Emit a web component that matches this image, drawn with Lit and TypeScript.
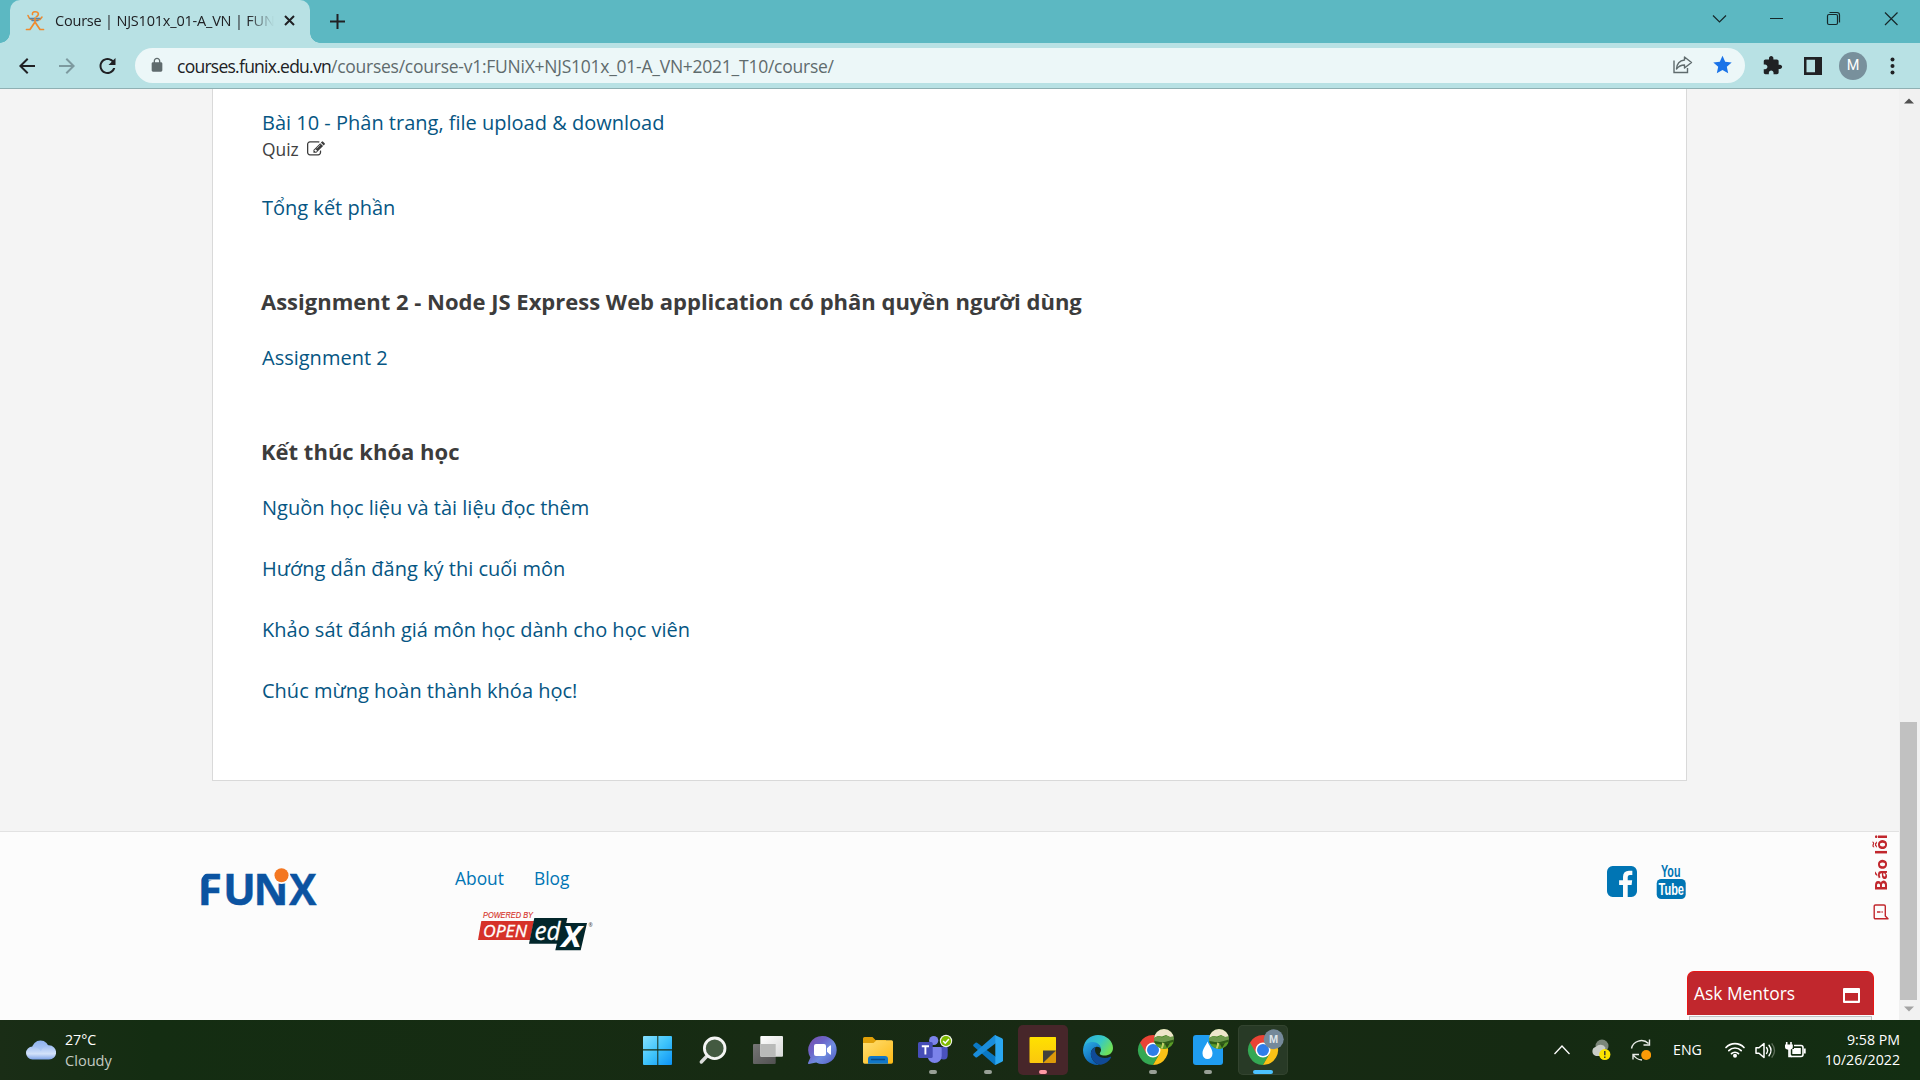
import { LitElement, html, css, svg, nothing, TemplateResult } from "lit";
import { customElement, property } from "lit/decorators.js";
import { classMap } from "lit/directives/class-map.js";

const chromeLogo = svg`
  <path d="M12 17.500 A15 15 0 0 0 25 40 L31.500 28.700 L25 25 Z" fill="#34a853"/>
  <path d="M25 17.500 H38 A15 15 0 0 1 25 40 L31.500 28.700 Z" fill="#fbc116"/>
  <path d="M12 17.500 A15 15 0 0 1 38 17.500 H25 L18.500 28.700 Z" fill="#ea4335"/>
  <circle cx="25" cy="25" r="7.500" fill="#fff"/><circle cx="25" cy="25" r="6" fill="#2f7de9"/>`;

const photoBadge = svg`
  <clipPath id="pb"><circle cx="36" cy="14" r="10"/></clipPath>
  <g clip-path="url(#pb)">
    <rect x="26" y="4" width="20" height="20" fill="#44801f"/>
    <path d="M26 4h20v7.500l-4 .5-4-2-4 1.500-4-.5-4 2z" fill="#efe6cb"/>
    <path d="M26 13l4-2 4 1.500 4-2 4 1.500 4-.5v4l-9 2-11-1z" fill="#6f9a4c"/>
    <path d="M26 16l9 1.500 11-3v3l-9 2-11-1z" fill="#2f5c18"/>
    <path d="M27 19l8 1 10-3v7H26z" fill="#5a9a28"/>
    <path d="M34 17.500l2.500 1-2 5.500h-2l1.500-4z" fill="#c5cf6a"/>
    <path d="M37 19l5-1-3 5z" fill="#2c4f17"/>
  </g>`;

interface App { name: string; kind?: string; art: TemplateResult; run?: string; }

const apps: App[] = [
  { name: "Start", art: svg`
    <linearGradient id="st" x1="0" y1="0" x2="1" y2="1"><stop offset="0" stop-color="#86e1ff"/><stop offset=".5" stop-color="#3fc4fb"/><stop offset="1" stop-color="#0c93f5"/></linearGradient>
    <path d="M11 11h13.300v13.300H10V12a1 1 0 0 1 1-1zM25.300 11H38a1 1 0 0 1 1 1v12.300H25.300zM10 25.600h14.300V40H11a1 1 0 0 1-1-1zM25.300 25.600H39V39a1 1 0 0 1-1 1H25.300z" fill="url(#st)"/>` },
  { name: "Search", art: svg`
    <path d="M18.500 31.500L13.300 37" stroke="#dadcdb" stroke-width="3.400" stroke-linecap="round"/>
    <circle cx="26.700" cy="23.300" r="10.300" fill="#435a41" stroke="#f4f5f4" stroke-width="2.800"/>` },
  { name: "Task view", art: svg`
    <linearGradient id="tg" x1="0" y1="0" x2="1" y2="1"><stop offset="0" stop-color="#767676"/><stop offset="1" stop-color="#515151"/></linearGradient>
    <linearGradient id="tw" x1="0" y1="0" x2="1" y2="1"><stop offset="0" stop-color="#fff"/><stop offset="1" stop-color="#d8d8d8"/></linearGradient>
    <rect x="10" y="19" width="22.700" height="20" rx="1" fill="url(#tg)"/>
    <rect x="17.300" y="11" width="22.700" height="20.700" rx="1" fill="url(#tw)"/>
    <path d="M17.300 19h15.400v12.700H18.300a1 1 0 0 1-1-1z" fill="#b9bab9"/>` },
  { name: "Chat", art: svg`
    <linearGradient id="ch" x1="0" y1="0" x2="1" y2="1"><stop offset="0" stop-color="#7a4fa8"/><stop offset=".35" stop-color="#6c64c8"/><stop offset=".6" stop-color="#6f8de0"/><stop offset="1" stop-color="#5257c0"/></linearGradient>
    <path d="M24.700 11a14 14 0 1 1-6.500 26.400L11 39c-1 .2-1.300-.7-.8-1.400l2.200-5.200A14 14 0 0 1 24.700 11z" fill="url(#ch)"/>
    <rect x="16" y="19" width="12" height="12" rx="2" fill="#fff"/><path d="M29 23.200l3-2.700q1-.5 1 .6v7.800q0 1.100-1 .6l-3-2.700z" fill="#fff"/>` },
  { name: "File Explorer", art: svg`
    <linearGradient id="fo" x1="0" y1="0" x2="1" y2="1"><stop offset="0" stop-color="#ffdf74"/><stop offset="1" stop-color="#fdb914"/></linearGradient>
    <path d="M11.500 12h8l3 3H33v6H10v-7.500q0-1.500 1.500-1.500z" fill="#e0a008"/>
    <path d="M10 18h10.500l3-2.800H38.500q1.500 0 1.500 1.500V37q0 1.700-1.700 1.700H11.700Q10 38.700 10 37z" fill="url(#fo)"/>
    <path d="M15 38.700V34q0-3 3-3h14q3 0 3 3v4.700z" fill="#1177c8"/><path d="M18.500 34.500h13" stroke="#0a4a86" stroke-width="1.300" stroke-linecap="round"/>` },
  { name: "Teams", run: "idle", art: svg`
    <circle cx="25.700" cy="15.500" r="4.600" fill="#7b83eb"/>
    <path d="M31 22h8q.7 0 .7.800V30q0 4.500-4 4.500T31 31z" fill="#4a52be"/>
    <path d="M19.700 22h12.500q1.500 0 1.500 1.500V31a7 7 0 0 1-14 0z" fill="#7b83eb"/>
    <rect x="10" y="17" width="14.700" height="16" rx="1.500" fill="#464eb8"/>
    <path d="M13.800 21.200h7.200M17.400 21.200v8.300" stroke="#fff" stroke-width="1.900" fill="none"/>
    <circle cx="38" cy="16" r="6.200" fill="#f0f3ea"/><circle cx="38" cy="16" r="5.100" fill="#7fba00"/>
    <path d="M35.200 16l2 2.200 3.700-4.200" stroke="#fff" stroke-width="1.500" fill="none"/>` },
  { name: "VS Code", run: "idle", art: svg`
    <path d="M10.500 19.500l2-1.800q.8-.6 1.600 0L33 32v7.800q-1.200.3-2-.5L10.500 21.200q-.8-.8 0-1.700z" fill="#0a78c4"/>
    <path d="M10.500 30.500l2 1.800q.8.600 1.600 0L33 18v-7.800q-1.200-.3-2 .5L10.500 28.800q-.8.800 0 1.700z" fill="#1a8ddb"/>
    <path d="M32.300 10.200L39 13.200Q40 13.700 40 14.800V35.200Q40 36.300 39 36.800L32.300 39.900Z" fill="#2aa7f0"/>` },
  { name: "Sticky Notes", kind: "alert", run: "warn", art: svg`
    <linearGradient id="sn" x1="0" y1="0" x2="0" y2="1"><stop offset="0" stop-color="#ffe100"/><stop offset="1" stop-color="#fbc70e"/></linearGradient>
    <path d="M12.500 12h25q.5 0 .5.500V26L26 38H12.500q-1 0-1-1V13q0-1 1-1z" fill="url(#sn)"/>
    <path d="M38 25.500V37q0 1-1 1H25z" fill="#dc9a0a"/><path d="M25 25.500h13L25 38z" fill="#41403c"/>` },
  { name: "Edge", art: svg`
    <linearGradient id="e1" x1="0" y1="0" x2="1" y2=".5"><stop offset="0" stop-color="#2aa9e4"/><stop offset=".6" stop-color="#37c9c4"/><stop offset="1" stop-color="#6ee05a"/></linearGradient>
    <linearGradient id="e2" x1="0" y1="0" x2=".6" y2="1"><stop offset="0" stop-color="#2cb0e8"/><stop offset="1" stop-color="#0b5db0"/></linearGradient>
    <path d="M10.300 23C11.500 15 17.500 10 25 10c9 0 15 6.500 15 13 0 5-4 7.500-8.500 7.500-4 0-5-1.500-4.700-2.300.4-1 1.200-1.500 1.200-3.400 0-3.500-4-7-8.500-7-4.500 0-7.500 2-9.200 5.200z" fill="url(#e1)"/>
    <path d="M10 25c0-4.500 4.500-8 9.500-8 5 0 8.500 3.500 8.500 7-1-1.500-3-2.500-5-2-4 1-5.500 4-5 8 .5 4.500 4 9 9 9.800C17.500 41 10 34.500 10 25z" fill="url(#e2)"/>
    <path d="M22.500 22.200c-3.500 1-5.500 5-4.300 9.300C19.500 36 24 40 28 39.700c4.500-.7 8-3.500 10-7 .4-.8-.2-1.200-.8-.9-4 2-10 1.500-13-1.800-2.500-2.700-2.600-5.300-1.700-7.800z" fill="#104a96"/>` },
  { name: "Chrome", run: "idle", art: svg`${chromeLogo}${photoBadge}` },
  { name: "Water", run: "idle", art: svg`
    <rect x="10" y="10" width="30" height="30" rx="3" fill="#1f9df1"/>
    <path d="M24.500 16.500c1.500 4 5 7.500 5 12a5 5.500 0 0 1-10 0c0-4.500 3.500-8 5-12z" fill="#fff"/>${photoBadge}` },
  { name: "Chrome profile", kind: "current", run: "on", art: svg`${chromeLogo}
    <circle cx="35.700" cy="14.300" r="10" fill="#75899a"/>
    <text x="35.700" y="18" text-anchor="middle" class="mono">M</text>` },
];

@customElement("task-bar")
export class TaskBar extends LitElement {
  static styles = css`
    :host { display: grid; grid-template-columns: 633px 1fr auto; height: 60px; background: linear-gradient(90deg, #1a2d16 0, #142d12 8%, #172b13 40%, #182a14 55%, #152a12 80%, #132e12 100%); color: #fff; font: 14.2px/20px "Open Sans", "Noto Sans", sans-serif; }
    svg { display: block; flex: none; }
    .weather { display: flex; align-items: center; padding-left: 26px; gap: 9px; }
    .cloudy { color: #c3cac2; font-size: 14.600px; }
    .apps { display: flex; gap: 5px; align-items: center; }
    .app { width: 50px; height: 50px; border-radius: 5px; display: grid; }
    .app > * { grid-area: 1 / 1; }
    .alert { background: #47262a; }
    .current { background: #283a26; box-shadow: inset 0 0 0 1px #33442f; }
    .pip { width: 8px; height: 4px; border-radius: 2px; background: #98a096; align-self: end; justify-self: center; margin-bottom: 1px; }
    .pip.warn { background: #ff99a4; }
    .pip.on { width: 20px; background: #4cc2ff; }
    .mono { font: 700 11px "Liberation Sans", sans-serif; fill: #dfe5e8; }
    .tray { display: flex; align-items: center; padding-right: 20px; }
    .clock { text-align: right; width: 82px; margin-left: 12px; }
    .lang { width: 30px; margin: 0 21px 0 22px; }
  `;
  render() {
    return html`
      <div class="weather">
        <svg width="30" height="22" viewBox="0 0 30 22">
          <defs><linearGradient id="cl" x1="0" y1="0" x2="0" y2="1"><stop offset="0" stop-color="#8fb2ef"/><stop offset="1" stop-color="#c3d9fb"/></linearGradient>
          <linearGradient id="cm" x1="0" y1="0" x2="0" y2="1"><stop offset="0" stop-color="#9dbcf2"/><stop offset=".6" stop-color="#d3e2fa"/><stop offset="1" stop-color="#7fa4e8"/></linearGradient></defs>
          <circle cx="14.500" cy="10" r="8.500" fill="url(#cl)"/>
          <path d="M6.500 7.500c4 0 7 2 8.500 5 1-3.500 4-6.200 8-6.200a7 7 0 0 1 0 14.200H6.500a6.500 6.500 0 0 1 0-13z" fill="url(#cm)"/>
        </svg>
        <div><div>27°C</div><div class="cloudy">Cloudy</div></div>
      </div>
      <div class="apps">${apps.map((a) => html`
        <div class=${classMap({ app: true, [a.kind ?? "plain"]: true })} aria-label=${a.name}>
          <svg width="50" height="50" viewBox="0 0 50 50" fill="none">${a.art}</svg>
          ${a.run ? html`<span class=${classMap({ pip: true, [a.run]: true })}></span>` : nothing}
        </div>`)}</div>
      <div class="tray">
        <svg width="120" height="40" viewBox="0 0 120 40" fill="none">
          <path d="M23.500 24l7.500-8 7.500 8" stroke="#fff" stroke-width="1.300"/>
          <circle cx="71" cy="16" r="6.500" fill="#7b8679"/><path d="M65 26a4.800 4.800 0 0 1 0-9.300 6 6 0 0 1 9.500 1l-3 8.300z" fill="#c8ccc7"/>
          <circle cx="75.300" cy="24.500" r="5.600" fill="#fbe300" transform="translate(-1.500 0)"/><path d="M73.800 21v4.200M73.800 26.500v1.500" stroke="#333" stroke-width="1.400"/>
          <path d="M100.500 18.500a10 9.500 0 0 1 17-5M118.500 9.500v5.500h-6M102 29.500v-5h6M102 24.500q3 5 9 5.500" stroke="#e8ebe7" stroke-width="1.400"/>
          <circle cx="115.200" cy="25" r="5" fill="#fb9a07"/>
        </svg>
        <span class="lang">ENG</span>
        <svg width="82" height="22" viewBox="0 0 82 22" fill="none">
          <g stroke="#fff" stroke-width="1.700" stroke-linecap="round"><path d="M2 8.500a12.300 12.300 0 0 1 18 0"/><path d="M4.800 11.700a8.500 8.500 0 0 1 12.400 0"/><path d="M7.500 14.700a5 5 0 0 1 7 0"/></g><circle cx="11" cy="16.800" r="2" fill="#fff"/>
          <path d="M32 8.800h3l5-4.300v14l-5-4.300h-3z" stroke="#fff" stroke-width="1.500" stroke-linejoin="round"/>
          <path d="M42.500 8.500q2.200 3 0 6M45 6.300q4 5.200 0 10.400" stroke="#fff" stroke-width="1.400" stroke-linecap="round"/><path d="M47.700 4.300q5.500 7.200 0 14.400" stroke="#5c6d59" stroke-width="1.400"/>
          <rect x="66" y="6.500" width="13" height="11" rx="2" stroke="#fff" stroke-width="1.600"/><rect x="68.300" y="9" width="8.500" height="6" fill="#fff"/><path d="M80.800 9.500v5" stroke="#fff" stroke-width="1.800"/>
          <path d="M60.500 4.500h9.500v5.500h-9z" fill="#152a12"/><path d="M62.700 3v3M67 3v3M65 10v7.500h3" stroke="#fff" stroke-width="1.600"/><path d="M61 5.500h7.800v2.500q0 2.800-3.900 2.800T61 8z" fill="#fff"/>
        </svg>
        <div class="clock"><div>9:58 PM</div><div>10/26/2022</div></div>
      </div>`;
  }
}

@customElement("browser-chrome")
export class BrowserChrome extends LitElement {
  static styles = css`
    :host { display: block; font-family: "Open Sans", "Noto Sans", sans-serif; color: #202124; }
    svg { display: block; flex: none; }
    .strip { height: 43px; background: #5cb8c2; display: flex; align-items: flex-end; }
    .edge { width: 10px; height: 10px; overflow: hidden; }
    .edge.l { background: radial-gradient(circle at 0 0, #5cb8c2 9.500px, #b8e1e4 10px); }
    .edge.r { background: radial-gradient(circle at 100% 0, #5cb8c2 9.500px, #b8e1e4 10px); }
    .tab { width: 300px; height: 43px; box-sizing: border-box; background: #b8e1e4; border-radius: 10px 10px 0 0; display: flex; align-items: center; padding: 0 14px 2px 15px; }
    .title { width: 219px; margin-left: 10px; overflow: hidden; white-space: nowrap; font-size: 14.500px; letter-spacing: -0.200px; line-height: 22px; mask-image: linear-gradient(90deg, #000 88%, transparent 100%); }
    .tab .x { margin-left: 10px; }
    .plus { margin: 0 0 14px 10px; }
    .win { margin-left: auto; height: 43px; }
    .bar { height: 45px; background: #b8e1e4; border-bottom: 1px solid #8fb0b3; display: flex; align-items: center; }
    .nav { display: flex; gap: 20px; padding-left: 17px; width: 135px; box-sizing: border-box; }
    .omni { width: 1610px; height: 35px; margin-top: -1px; border-radius: 18px; background: #ecf7f8; display: flex; align-items: center; box-sizing: border-box; padding: 0 12px 0 14px; font-size: 17.500px; line-height: 24px; white-space: nowrap; color: #5f6b6d; }
    .host, .path { padding-top: 1px; }
    .host { color: #202124; margin-left: 12px; letter-spacing: -0.740px; }
    .path { letter-spacing: -0.250px; }
    .right { margin-left: auto; }
    .avatar { width: 28px; height: 28px; border-radius: 50%; background: #78909c; color: #fff; font: 14.500px/28px Roboto, sans-serif; text-align: center; margin: 0 15px 0 17px; }
    .tools { display: flex; align-items: center; padding-left: 17px; }
    .side { margin-left: 21px; }
  `;
  render() {
    return html`
      <div class="strip">
        <div class="edge l"></div>
        <div class="tab">
          <svg width="20" height="22" viewBox="0 0 20 22" fill="none" stroke-linecap="round" stroke-linejoin="round">
            <path d="M7.500 4.500Q7 1.800 10 1.700t3.300 2-2 3M3 5.500l1.500 3L8 10M17 7l-2 2.500-4 1" stroke="#f08a2c" stroke-width="1.600"/>
            <path d="M5 8.500h10M7 10.500h6" stroke="#5c84a6" stroke-width="1.300"/>
            <path d="M10 8v5M10 12l-5 7.500H1.500M10 12l5 7.500h3.500" stroke="#f08a2c" stroke-width="1.700"/>
          </svg>
          <span class="title">Course | NJS101x_01-A_VN | FUN</span>
          <svg class="x" width="11" height="11" viewBox="0 0 11 11" stroke="#202124" stroke-width="2"><path d="M1 1l9 9M10 1l-9 9"/></svg>
        </div>
        <div class="edge r"></div>
        <svg class="plus" width="15" height="15" viewBox="0 0 15 15" stroke="#202124" stroke-width="2"><path d="M7.500 0v15M0 7.500h15"/></svg>
        <svg class="win" width="220" height="43" viewBox="1700 0 220 43" fill="none" stroke="#16282a" stroke-width="1.200">
          <path d="M1713 15.500l6.500 6.500 6.500-6.500M1770 18.500h13M1885 12.500l12.500 12.500M1897.500 12.500L1885 25"/>
          <rect x="1827.500" y="14.500" width="10" height="10" rx="1.500"/><path d="M1829.500 12.500h7.500q2.500 0 2.500 2.500v7.500"/>
        </svg>
      </div>
      <div class="bar">
        <div class="nav">
          <svg width="20" height="20" viewBox="2 2 20 20" fill="#202124"><path d="M20 11H7.830l5.590-5.590L12 4l-8 8 8 8 1.410-1.410L7.830 13H20z"/></svg>
          <svg width="20" height="20" viewBox="2 2 20 20" fill="#7d9a9f"><path d="M4 11h12.170l-5.590-5.590L12 4l8 8-8 8-1.410-1.410L16.170 13H4z"/></svg>
          <svg width="21" height="20" viewBox="2 2 20 20" fill="#202124"><path d="M17.650 6.350C16.200 4.900 14.210 4 12 4c-4.420 0-7.990 3.580-7.990 8s3.570 8 7.990 8c3.730 0 6.840-2.550 7.730-6h-2.080c-.82 2.330-3.040 4-5.650 4-3.310 0-6-2.690-6-6s2.690-6 6-6c1.660 0 3.140.69 4.220 1.780L13 11h7V4l-2.350 2.350z"/></svg>
        </div>
        <div class="omni">
          <svg width="16" height="16" viewBox="0 0 24 24" fill="#5f6b6d"><path d="M18 8h-1V6c0-2.760-2.240-5-5-5S7 3.240 7 6v2H6c-1.100 0-2 .9-2 2v10c0 1.100.9 2 2 2h12c1.100 0 2-.9 2-2V10c0-1.100-.9-2-2-2zM9 6c0-1.660 1.340-3 3-3s3 1.340 3 3v2H9V6z"/></svg>
          <span class="host">courses.funix.edu.vn</span><span class="path">/courses/course-v1:FUNiX+NJS101x_01-A_VN+2021_T10/course/</span>
          <svg class="right" width="61" height="22" viewBox="0 0 61 22" fill="none">
            <path d="M2 6.500v12h13.500V14" stroke="#5f6b6d" stroke-width="1.400"/>
            <path d="M12.500 3l7 5.500-7 5.500V11q-5 0-8 4 .5-8 8-9z" stroke="#5f6b6d" stroke-width="1.400" stroke-linejoin="round"/>
            <path d="M50.500 1.700l2.700 6 6.500.7-4.900 4.400 1.400 6.500-5.700-3.400-5.700 3.400 1.400-6.500-4.900-4.400 6.500-.7z" fill="#1a73e8"/>
          </svg>
        </div>
        <div class="tools">
          <svg width="21" height="21" viewBox="0 0 24 24" fill="#202124"><path d="M20.500 11H19V7c0-1.100-.9-2-2-2h-4V3.500C13 2.120 11.880 1 10.500 1S8 2.120 8 3.500V5H4c-1.100 0-1.990.9-1.990 2v3.800H3.500c1.490 0 2.700 1.210 2.700 2.700s-1.210 2.700-2.700 2.700H2V20c0 1.100.9 2 2 2h3.800v-1.500c0-1.490 1.210-2.700 2.700-2.700s2.700 1.210 2.700 2.700V22H17c1.100 0 2-.9 2-2v-4h1.500c1.380 0 2.500-1.120 2.500-2.500S21.880 11 20.500 11z"/></svg>
          <svg class="side" width="18" height="18" viewBox="0 0 18 18"><path fill="#202124" fill-rule="evenodd" d="M0 0h18v18H0zM2.500 2.800v12.400H11V2.800z"/></svg>
          <div class="avatar">M</div>
          <svg width="20" height="20" viewBox="0 0 20 20" fill="#202124"><circle cx="10.500" cy="3.500" r="2"/><circle cx="10.500" cy="10" r="2"/><circle cx="10.500" cy="16.500" r="2"/></svg>
        </div>
      </div>`;
  }
}

interface Section { title?: string; items: { text: string; quiz?: boolean }[]; }

const outline: Section[] = [
  { items: [{ text: "Bài 10 - Phân trang, file upload & download", quiz: true }, { text: "Tổng kết phần" }] },
  { title: "Assignment 2 - Node JS Express Web application có phân quyền người dùng", items: [{ text: "Assignment 2" }] },
  { title: "Kết thúc khóa học", items: [
    { text: "Nguồn học liệu và tài liệu đọc thêm" },
    { text: "Hướng dẫn đăng ký thi cuối môn" },
    { text: "Khảo sát đánh giá môn học dành cho học viên" },
    { text: "Chúc mừng hoàn thành khóa học!" }] },
];

@customElement("course-outline")
export class CourseOutline extends LitElement {
  @property({ attribute: false }) sections: Section[] = [];
  static styles = css`
    :host { display: flex; flex-direction: column; gap: 64px; box-sizing: border-box; width: 1475px; height: 692px; margin-left: 212px; padding: 20px 48px 0; background: #fff; border: 1px solid #d9d9d9; border-top: 0; font: 20px/28px "Open Sans", "Noto Sans", sans-serif; }
    h3 { margin: 0 0 28px; font-size: 22px; line-height: 30px; color: #3c3c3c; }
    .list { display: flex; flex-direction: column; gap: 33px; padding-left: 1px; }
    .link { color: #065683; }
    .quiz { display: flex; align-items: center; gap: 8px; font-size: 17.400px; line-height: 24px; color: #414141; }
  `;
  render() {
    return this.sections.map((s) => html`
      <section>
        ${s.title ? html`<h3>${s.title}</h3>` : nothing}
        <div class="list">${s.items.map((i) => html`
          <div>
            <div class="link">${i.text}</div>
            ${i.quiz ? html`<div class="quiz">Quiz
              <svg width="18" height="18" viewBox="0 0 1792 1792" fill="#3c3c3c"><path d="M888 1184l116-116-152-152-116 116v56h96v96h56zm440-720q-16-16-33 1l-350 350q-17 17-1 33t33-1l350-350q17-17 1-33zm80 594v190q0 119-84.500 203.500t-203.500 84.500h-832q-119 0-203.500-84.500t-84.500-203.500v-832q0-119 84.500-203.500t203.500-84.500h832q63 0 117 25 15 7 18 23 3 17-9 29l-49 49q-14 14-32 8-23-6-45-6h-832q-66 0-113 47t-47 113v832q0 66 47 113t113 47h832q66 0 113-47t47-113v-126q0-13 9-22l64-64q15-15 35-7t20 29zm-96-738l288 288-672 672h-288v-288zm444 132l-92 92-288-288 92-92q28-28 68-28t68 28l152 152q28 28 28 68t-28 68z"/></svg>
            </div>` : nothing}
          </div>`)}</div>
      </section>`);
  }
}

@customElement("site-footer")
export class SiteFooter extends LitElement {
  static styles = css`
    :host { display: flex; box-sizing: border-box; height: 189px; margin-top: 50px; padding: 32px 212px 0 196px; background: #fcfcfc; border-top: 1px solid #e2e2e2; font: 17.400px/28px "Open Sans", "Noto Sans", sans-serif; }
    svg { display: block; flex: none; overflow: visible; }
    .mark { margin-top: -6px; }
    .mid { margin-left: 135px; }
    .links { display: flex; gap: 30px; color: #0075b4; }
    .edx { margin: 14px 0 0 23px; }
    .social { margin-left: auto; display: flex; gap: 19px; }
    .fb { margin-top: 2px; }
    .yt-logo { margin-top: -2px; }
    .word { font: 700 43px "Open Sans", sans-serif; fill: #0b53a1; stroke: #0b53a1; stroke-width: 0.400px; }
    .pow { font: italic 8.500px "Liberation Sans", sans-serif; fill: #d63229; stroke: #d63229; stroke-width: .15px; }
    .open { font: italic 17px "Open Sans", sans-serif; fill: #fff; stroke: #fff; stroke-width: .3px; }
    .ed { font: italic 25px "Open Sans", sans-serif; fill: #fff; stroke: #fff; stroke-width: .3px; }
    .ex { font: italic 700 29px "Open Sans", sans-serif; fill: #fff; }
    .reg { font: 5px "Open Sans", sans-serif; fill: #333; }
    .yt { font: 700 17px "Liberation Sans Narrow", "Liberation Sans", sans-serif; fill: #0075b4; }
    .in { fill: #fff; }
  `;
  render() {
    return html`
      <svg class="mark" width="124" height="62" viewBox="196 858 124 62">
        <text class="word" x="197.500" y="905" textLength="24.500" lengthAdjust="spacingAndGlyphs">F</text>
        <path d="M199 872h12.500q-10.500 1-11 11.500H199z" fill="#fcfcfc"/>
        <path d="M207 880.500h5q-5 .2-5 5z" fill="#0b53a1"/>
        <text class="word" x="223" y="905" textLength="33" lengthAdjust="spacingAndGlyphs">U</text>
        <text class="word" x="253.500" y="905" textLength="35" lengthAdjust="spacingAndGlyphs">N</text>
        <text class="word" x="289" y="905" textLength="27.500" lengthAdjust="spacingAndGlyphs">X</text>
        <circle cx="281.500" cy="875.500" r="8.600" fill="#fcfcfc"/><circle cx="281.500" cy="875.300" r="7" fill="#f47721"/>
      </svg>
      <div class="mid">
        <div class="links"><span>About</span><span>Blog</span></div>
        <svg class="edx" width="122" height="52" viewBox="478 906 122 52">
          <text class="pow" x="483" y="918" textLength="50" lengthAdjust="spacingAndGlyphs">POWERED BY</text>
          <path d="M481.300 921H534l-4 19h-52z" fill="#d63229"/>
          <path d="M534.300 918H567.300l-1 5H587l-6.300 27.300h-25.400l1.500-6.600H529z" fill="#02262b"/>
          <text class="open" x="483" y="937" textLength="44" lengthAdjust="spacingAndGlyphs">OPEN</text>
          <text class="ed" x="534.500" y="939.500" textLength="26" lengthAdjust="spacingAndGlyphs">ed</text>
          <text class="ex" x="561.500" y="947" textLength="20" lengthAdjust="spacingAndGlyphs">X</text>
          <text class="reg" x="588.500" y="927">®</text>
        </svg>
      </div>
      <div class="social">
        <svg class="fb" width="30" height="31" viewBox="0 128 1536 1536" preserveAspectRatio="none" fill="#0075b4"><path d="M1248 128q119 0 203.500 84.500t84.500 203.500v960q0 119-84.500 203.500t-203.500 84.500h-188v-595h199l30-232h-229v-148q0-56 23.500-84t91.500-28l122-1v-207q-63-9-178-9-136 0-217.500 80t-81.500 226v171h-200v232h200v595h-532q-119 0-203.500-84.500t-84.500-203.500v-960q0-119 84.500-203.500t203.500-84.500z"/></svg>
        <svg class="yt-logo" width="31" height="38" viewBox="1656 862 31 38">
          <text class="yt" x="1661" y="877" textLength="19.500" lengthAdjust="spacingAndGlyphs">You</text>
          <rect x="1656.700" y="879" width="29" height="20" rx="4.500" fill="#0075b4"/>
          <text class="yt in" x="1658.500" y="895" textLength="25.500" lengthAdjust="spacingAndGlyphs">Tube</text>
        </svg>
      </div>`;
  }
}

@customElement("app-root")
export class AppRoot extends LitElement {
  static styles = css`
    :host { display: flex; flex-direction: column; width: 1920px; height: 1080px; overflow: hidden; background: #f4f4f4; font-family: "Open Sans", "Noto Sans", sans-serif; }
    .view { position: relative; flex: 1; min-height: 0; display: grid; grid-template-columns: 1899px 21px; overflow: hidden; }
    .scroll { background: #f1f1f1; display: flex; flex-direction: column; align-items: center; box-sizing: border-box; padding: 9px 2px 8px 0; }
    .thumb { width: 17px; height: 278px; margin: auto 0 6px; background: #c1c1c1; }
    svg { display: block; }
    .report { position: absolute; left: 1865px; top: 737px; width: 32px; height: 94px; display: flex; flex-direction: row; align-items: center; gap: 13px; writing-mode: vertical-rl; transform: rotate(180deg); color: #c1272d; font: 700 16.800px/32px "Open Sans", "Noto Sans", sans-serif; white-space: nowrap; }
    .bubble { transform: rotate(180deg); }
    .ask { position: absolute; left: 1687px; top: 882px; width: 187px; }
    .head { height: 44px; box-sizing: border-box; background: #c1272d; border: 1px solid #e81616; border-bottom: 0; border-radius: 7px 7px 0 0; color: #fff; display: flex; align-items: center; justify-content: space-between; padding: 3px 13px 0 6px; font-size: 17.400px; }
    .head span { margin-top: -4px; }
    .body { margin: 1px 2px 0; height: 6px; background: #f0f0f0; border: 1px solid #bfc3c5; border-bottom: 0; }
  `;
  render() {
    return html`
      <browser-chrome></browser-chrome>
      <div class="view">
        <main>
          <course-outline .sections=${outline}></course-outline>
          <site-footer></site-footer>
        </main>
        <div class="scroll">
          <svg width="10" height="6" viewBox="0 0 10 6"><path d="M0 5.500L5 .5l5 5z" fill="#505050"/></svg>
          <div class="thumb"></div>
          <svg width="10" height="6" viewBox="0 0 10 6"><path d="M0 .5L5 5.500l5-5z" fill="#a3a3a3"/></svg>
        </div>
        <div class="report">
          <svg class="bubble" width="16" height="16" viewBox="0 0 16 16" fill="none" stroke="#c1272d" stroke-width="1.400" stroke-linejoin="round"><path d="M2.500 1H11q1.300 0 1.300 1.300V12l2.700 2.800H2.500q-1.300 0-1.300-1.300V2.300Q1.200 1 2.500 1z"/><path d="M4 8h3.500M8.500 8h1.200" stroke-width="1.500"/></svg>
          <span>Báo lỗi</span>
        </div>
        <div class="ask">
          <div class="head"><span>Ask Mentors</span>
            <svg width="17" height="15" viewBox="0 0 17 15"><path fill="#fff" fill-rule="evenodd" d="M1 0h15q1 0 1 1v13q0 1-1 1H1q-1 0-1-1V1q0-1 1-1zM2 5v7.800h13V5z"/></svg>
          </div>
          <div class="body"></div>
        </div>
      </div>
      <task-bar></task-bar>`;
  }
}
